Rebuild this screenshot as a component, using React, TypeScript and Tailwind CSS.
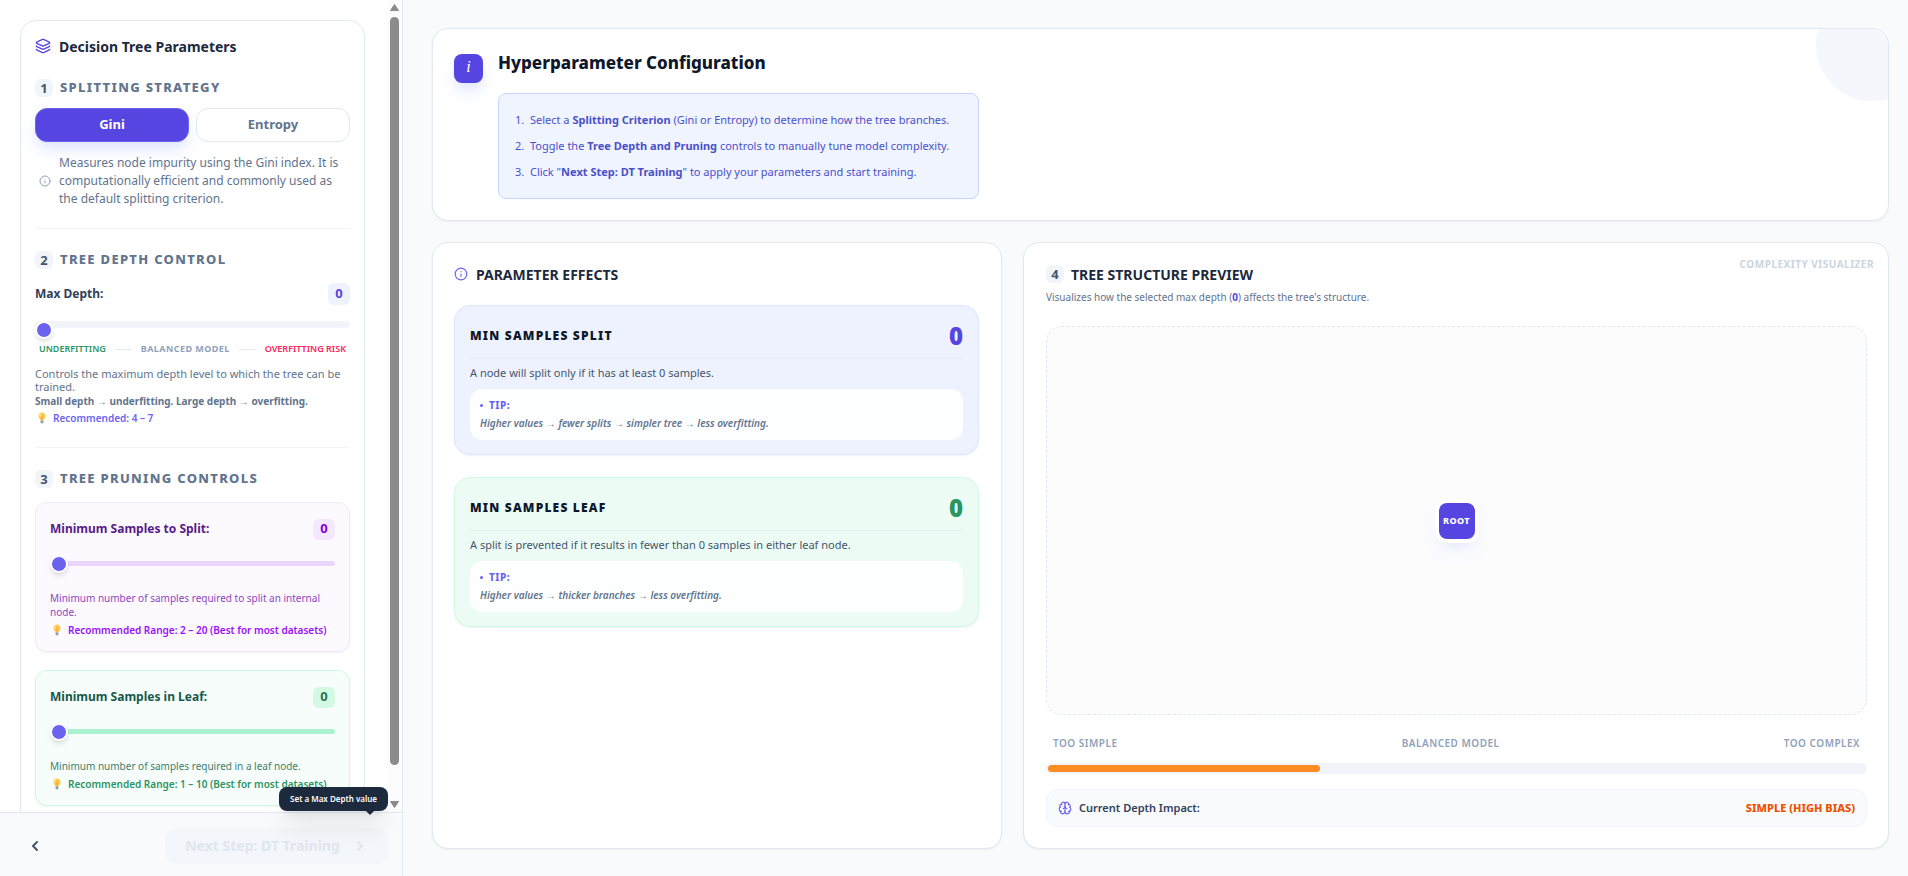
import { useState } from 'react';
import type { ReactNode } from 'react';
import { Brain, ChevronLeft, ChevronRight, Info, Layers } from 'lucide-react';
import clsx from 'clsx';

type Criterion = 'Gini' | 'Entropy';

const criterionText: Record<Criterion, string> = {
  Gini: 'Measures node impurity using the Gini index. It is computationally efficient and commonly used as the default splitting criterion.',
  Entropy: 'Measures information gain using entropy. It is slightly slower to compute and favours more balanced splits.',
};

const thumbClasses =
  '[&::-webkit-slider-thumb]:appearance-none [&::-webkit-slider-thumb]:size-[18px] [&::-webkit-slider-thumb]:rounded-full [&::-webkit-slider-thumb]:border-2 [&::-webkit-slider-thumb]:border-white [&::-webkit-slider-thumb]:bg-[#6b63f0] [&::-webkit-slider-thumb]:shadow-md';

function Bulb() {
  return (
    <svg viewBox="0 0 12 14" className="h-[12px] w-[10px] shrink-0" aria-hidden="true">
      <path d="M6 .5a4.3 4.3 0 0 0-2.6 7.7c.6.5.8 1.2.8 1.8h3.6c0-.6.2-1.3.8-1.8A4.3 4.3 0 0 0 6 .5z" fill="#fcc84a" />
      <path d="M4.6 2.2a2.3 2.3 0 0 0-1.2 2.6" stroke="#fff3c4" strokeWidth="1" fill="none" strokeLinecap="round" />
      <path d="M5 5.5l1 1 1-1M6 6.5V10" stroke="#f08c2e" strokeWidth=".7" fill="none" />
      <path d="M4.3 10h3.4v2.2c0 .7-.6 1.3-1.7 1.3s-1.7-.6-1.7-1.3z" fill="#8f9bab" />
    </svg>
  );
}

function StepBadge({ step }: { step: number }) {
  return (
    <span className="flex size-[18px] shrink-0 items-center justify-center rounded-md bg-slate-100 text-[13px] leading-none font-bold tracking-normal text-slate-600">
      {step}
    </span>
  );
}

function SectionTitle({ step, children }: { step: number; children: ReactNode }) {
  return (
    <h3 className="flex h-[18px] items-center gap-[7px] text-[13px] font-extrabold tracking-widest text-slate-500 uppercase">
      <StepBadge step={step} />
      {children}
    </h3>
  );
}

interface SampleSliderProps {
  id: string;
  label: string;
  value: number;
  max: number;
  onChange: (value: number) => void;
  help: string;
  range: string;
  tone: 'purple' | 'green';
}

function SampleSlider({ id, label, value, max, onChange, help, range, tone }: SampleSliderProps) {
  const purple = tone === 'purple';
  return (
    <div
      className={clsx(
        'rounded-xl border p-[14px] pt-[15px] shadow-xs',
        purple ? 'border-purple-100 bg-[#fdfaff]' : 'border-[#cffae2] bg-[#f7fdfa]',
      )}
    >
      <div className="flex h-[22px] items-center justify-between">
        <label htmlFor={id} className={clsx('text-[12px] font-bold', purple ? 'text-[#581c87]' : 'text-[#17594a]')}>
          {label}
        </label>
        <span
          className={clsx(
            'flex h-[21px] w-[22px] items-center justify-center rounded-md text-[13px] font-bold',
            purple ? 'bg-purple-100 text-[#8200db]' : 'bg-[#d3f9e3] text-[#28745c]',
          )}
        >
          {value}
        </span>
      </div>
      <input
        id={id}
        type="range"
        min={0}
        max={max}
        value={value}
        onChange={(e) => onChange(Number(e.target.value))}
        className={clsx(
          'mt-[21px] block h-[5px] w-full cursor-pointer appearance-none rounded-full',
          thumbClasses,
          purple ? 'bg-[#e9d5ff]' : 'bg-[#a9f3d0]',
        )}
      />
      <p className={clsx('mt-[25px] text-[10px] leading-[14px]', purple ? 'text-[#8e44bd]' : 'text-[#3d7f6b]')}>{help}</p>
      <p
        className={clsx(
          'mt-1 flex items-center gap-1.5 pl-0.5 text-[10px] leading-[14px] font-semibold',
          purple ? 'text-[#9810fa]' : 'text-[#2a9465]',
        )}
      >
        <Bulb />
        Recommended Range: {range} (Best for most datasets)
      </p>
    </div>
  );
}

interface EffectCardProps {
  title: string;
  value: number;
  text: string;
  tip: string;
  tone: 'indigo' | 'green';
}

function EffectCard({ title, value, text, tip, tone }: EffectCardProps) {
  const indigo = tone === 'indigo';
  return (
    <article
      className={clsx(
        'rounded-2xl border px-[15px] pt-[15px] pb-[14px] shadow-xs',
        indigo ? 'border-[#dbe7fe] bg-[#eef2ff]' : 'border-[#d0fae5] bg-[#ecfcf5]',
      )}
    >
      <div className="flex h-[38px] items-center justify-between border-b border-slate-200/60 pb-[7px]">
        <h4 className="text-[12px] font-black tracking-widest text-slate-900 uppercase">{title}</h4>
        <span className={clsx('text-[24px] leading-none font-black', indigo ? 'text-[#5745e2]' : 'text-[#2a9465]')}>{value}</span>
      </div>
      <p className="mt-1.5 text-[11px] leading-4 text-slate-600">{text}</p>
      <div className="mt-2 rounded-xl bg-white/90 px-2.5 pt-[7px] pb-2">
        <p className="flex items-center gap-1.5 text-[10px] leading-[18px] font-extrabold tracking-wider text-[#6b63f0]">
          <span className="size-[3px] rounded-full bg-[#6b63f0]" />
          TIP:
        </p>
        <p className="text-[10px] leading-[18px] font-semibold text-slate-500 italic">{tip}</p>
      </div>
    </article>
  );
}

export default function App() {
  const [criterion, setCriterion] = useState<Criterion>('Gini');
  const [maxDepth, setMaxDepth] = useState(0);
  const [minSplit, setMinSplit] = useState(0);
  const [minLeaf, setMinLeaf] = useState(0);

  return (
    <div className="flex h-screen overflow-hidden bg-[#f8fafc] font-['Noto_Sans',sans-serif] text-slate-800">
      {/* Sidebar */}
      <aside className="flex w-[403px] shrink-0 flex-col border-r border-slate-200 bg-white">
        <div className="flex min-h-0 flex-1">
          <div className="min-w-0 flex-1 overflow-hidden pt-5 pr-[22px] pl-5">
            <div className="rounded-2xl border border-slate-200 p-[14px] pb-6">
              <h2 className="flex h-[22px] items-center gap-2 text-[14px] font-bold text-slate-800">
                <Layers className="size-4 text-[#5745e2]" strokeWidth={2} />
                Decision Tree Parameters
              </h2>

              {/* Splitting strategy */}
              <section className="mt-[22px] border-b border-slate-100 pb-5">
                <SectionTitle step={1}>Splitting Strategy</SectionTitle>
                <div className="mt-[11px] grid grid-cols-2 gap-[7px]">
                  {(['Gini', 'Entropy'] as Criterion[]).map((c) => (
                    <button
                      key={c}
                      type="button"
                      onClick={() => setCriterion(c)}
                      className={clsx(
                        'h-[34px] rounded-xl border text-[13px] font-bold',
                        criterion === c
                          ? 'border-[#6b63f0] bg-[#5745e2] text-white shadow-lg shadow-indigo-100'
                          : 'border-slate-200 bg-white text-slate-500',
                      )}
                    >
                      {c}
                    </button>
                  ))}
                </div>
                <p className="mt-3 flex items-center gap-2 pl-1 text-[12px] leading-[18px] text-slate-500">
                  <Info className="size-3 shrink-0 text-slate-400" />
                  {criterionText[criterion]}
                </p>
              </section>

              {/* Depth */}
              <section className="mt-[22px] border-b border-slate-100 pb-[21px]">
                <SectionTitle step={2}>Tree Depth Control</SectionTitle>
                <div className="mt-[14px] flex items-center justify-between">
                  <label htmlFor="max-depth" className="text-[12px] font-bold text-slate-700">
                    Max Depth:
                  </label>
                  <span className="flex size-[22px] items-center justify-center rounded-md bg-[#eef2ff] text-[13px] font-bold text-[#5745e2]">
                    {maxDepth}
                  </span>
                </div>
                <input
                  id="max-depth"
                  type="range"
                  min={0}
                  max={20}
                  value={maxDepth}
                  onChange={(e) => setMaxDepth(Number(e.target.value))}
                  className={clsx(
                    'mt-4 block h-[7px] w-full cursor-pointer appearance-none rounded-full bg-slate-100 [&::-webkit-slider-runnable-track]:h-[7px]',
                    thumbClasses,
                  )}
                />
                <div className="mt-[14px] flex items-center justify-between px-1 text-[9px] leading-[14px]">
                  <span className="font-semibold text-[#2a9465]">UNDERFITTING</span>
                  <span className="h-px w-4 bg-slate-200" />
                  <span className="font-bold tracking-wider text-slate-400">BALANCED MODEL</span>
                  <span className="h-px w-4 bg-slate-200" />
                  <span className="font-semibold text-[#fb2357]">OVERFITTING RISK</span>
                </div>
                <p className="mt-[11px] text-[11px] leading-[13px] text-slate-500">
                  Controls the maximum depth level to which the tree can be trained.
                </p>
                <p className="text-[10px] leading-4 font-bold text-slate-500">
                  Small depth → underfitting. Large depth → overfitting.
                </p>
                <p className="mt-px flex items-center gap-1.5 pl-0.5 text-[10px] leading-4 font-semibold text-[#6b63f0]">
                  <Bulb />
                  Recommended: 4 – 7
                </p>
              </section>

              {/* Pruning */}
              <section className="mt-[22px]">
                <SectionTitle step={3}>Tree Pruning Controls</SectionTitle>
                <div className="mt-[14px] space-y-[18px]">
                  <SampleSlider
                    id="min-split"
                    label="Minimum Samples to Split:"
                    value={minSplit}
                    max={20}
                    onChange={setMinSplit}
                    help="Minimum number of samples required to split an internal node."
                    range="2 – 20"
                    tone="purple"
                  />
                  <SampleSlider
                    id="min-leaf"
                    label="Minimum Samples in Leaf:"
                    value={minLeaf}
                    max={10}
                    onChange={setMinLeaf}
                    help="Minimum number of samples required in a leaf node."
                    range="1 – 10"
                    tone="green"
                  />
                </div>
              </section>
            </div>
          </div>

          {/* Scrollbar */}
          <div className="flex w-[15px] shrink-0 flex-col items-center bg-[#fcfcfc] py-1" aria-hidden="true">
            <svg viewBox="0 0 9 7" className="h-[7px] w-[9px]">
              <path d="M4.5 .5 8.5 6.5H.5z" fill="#8b8b8b" stroke="#8b8b8b" strokeLinejoin="round" />
            </svg>
            <div className="mt-1.5 w-[9px] flex-1 rounded-full bg-[#8b8b8b]" />
            <svg viewBox="0 0 9 7" className="mt-9 h-[7px] w-[9px]">
              <path d="M4.5 6.5 8.5.5H.5z" fill="#8b8b8b" stroke="#8b8b8b" strokeLinejoin="round" />
            </svg>
          </div>
        </div>

        <footer className="flex h-16 shrink-0 items-center justify-between border-t border-slate-200 bg-[#f8fafc] pt-0.5 pr-[14px] pl-[19px]">
          <button type="button" aria-label="Back" className="flex size-8 items-center justify-center text-slate-600">
            <ChevronLeft className="size-4" strokeWidth={3} />
          </button>
          <div className="relative">
            <button
              type="button"
              disabled
              className="flex h-9 w-[223px] items-center justify-center gap-3 rounded-xl bg-[#f3f6fa] text-[14px] font-bold text-[#e0e6ef]"
            >
              Next Step: DT Training
              <ChevronRight className="size-4" strokeWidth={3} />
            </button>
            <div
              role="tooltip"
              className="absolute right-0 bottom-full mb-[17px] rounded-lg bg-slate-800 px-[11px] py-[5px] text-[8px] leading-[14px] font-semibold whitespace-nowrap text-white shadow-xl"
            >
              Set a Max Depth value
              <span className="absolute top-full right-[14px] border-4 border-transparent border-t-slate-800" />
            </div>
          </div>
        </footer>
      </aside>

      {/* Main */}
      <main className="flex min-w-0 flex-1 flex-col gap-[21px] pt-7 pr-[19px] pb-[27px] pl-[29px]">
        <section className="relative flex items-start gap-[15px] overflow-hidden rounded-2xl border border-slate-200 bg-white px-[21px] pt-[22px] pb-[21px] shadow-xs">
          <span className="absolute -top-10 -right-10 size-28 rounded-full bg-[#f6f7fd]" />
          <span className="mt-[3px] flex size-[29px] shrink-0 items-center justify-center rounded-lg bg-[#5745e2] pb-1 font-['Liberation_Serif',serif] text-[16px] leading-none text-white italic shadow-lg shadow-indigo-100">
            i
          </span>
          <div>
            <h1 className="text-[17px] leading-6 font-extrabold text-slate-900">Hyperparameter Configuration</h1>
            <ol className="mt-[18px] rounded-lg border border-[#c6d2ff] bg-[#f0f4ff] py-[13px] pr-[29px] pl-4 text-[11px] leading-[26px] text-[#4a50c8]">
              <li>
                1.&nbsp; Select a <strong className="font-bold">Splitting Criterion</strong> (Gini or Entropy) to determine how the tree branches.
              </li>
              <li>
                2.&nbsp; Toggle the <strong className="font-bold">Tree Depth and Pruning</strong> controls to manually tune model complexity.
              </li>
              <li>
                3.&nbsp; Click "<strong className="font-bold">Next Step: DT Training</strong>" to apply your parameters and start training.
              </li>
            </ol>
          </div>
        </section>

        <div className="grid min-h-0 flex-1 grid-cols-[570fr_866fr] gap-[21px]">
          {/* Parameter effects */}
          <section className="rounded-2xl border border-slate-200 bg-white p-[21px] pr-[22px] shadow-xs">
            <h2 className="flex h-5 items-center gap-2 text-[14px] font-bold text-slate-800">
              <Info className="size-[14px] text-[#6b63f0]" />
              PARAMETER EFFECTS
            </h2>
            <div className="mt-[21px] space-y-[22px]">
              <EffectCard
                title="Min Samples Split"
                value={minSplit}
                text={`A node will split only if it has at least ${minSplit} samples.`}
                tip="Higher values → fewer splits → simpler tree → less overfitting."
                tone="indigo"
              />
              <EffectCard
                title="Min Samples Leaf"
                value={minLeaf}
                text={`A split is prevented if it results in fewer than ${minLeaf} samples in either leaf node.`}
                tip="Higher values → thicker branches → less overfitting."
                tone="green"
              />
            </div>
          </section>

          {/* Tree preview */}
          <section className="relative flex flex-col rounded-2xl border border-slate-200 bg-white p-[21px] pl-[22px] shadow-xs">
            <span className="absolute top-[13px] right-[14px] text-[10px] leading-4 font-bold tracking-wider text-slate-300">
              COMPLEXITY VISUALIZER
            </span>
            <h2 className="flex h-5 items-center gap-[7px] text-[14px] font-bold text-slate-800">
              <StepBadge step={4} />
              TREE STRUCTURE PREVIEW
            </h2>
            <p className="mt-1 text-[10px] leading-[18px] text-slate-500">
              Visualizes how the selected max depth (<strong className="font-bold text-[#5745e2]">{maxDepth}</strong>) affects the tree's structure.
            </p>
            <div className="mt-5 flex min-h-0 flex-1 items-center justify-center rounded-2xl border border-dashed border-slate-200 bg-[#fcfcfd]">
              <div className="flex size-9 items-center justify-center rounded-lg bg-[#5745e2] text-[9px] font-extrabold tracking-wider text-white shadow-lg ring-4 shadow-indigo-100 ring-white">
                ROOT
              </div>
            </div>
            <div className="mt-5 flex justify-between px-[7px] text-[10px] leading-4 font-semibold tracking-wider text-slate-400">
              <span>TOO SIMPLE</span>
              <span>BALANCED MODEL</span>
              <span>TOO COMPLEX</span>
            </div>
            <div className="mt-3 rounded-full bg-slate-100 p-0.5">
              <div className="h-[7px] w-1/3 rounded-full bg-[#fd8c25]" />
            </div>
            <div className="mt-[15px] flex h-[38px] items-center justify-between rounded-xl border border-slate-100 bg-[#f8fafc] px-[11px] text-[11px]">
              <span className="flex items-center gap-[7px] font-semibold text-slate-700">
                <Brain className="size-[14px] text-[#6b63f0]" />
                Current Depth Impact:
              </span>
              <span className="font-extrabold text-[#ed5200]">SIMPLE (HIGH BIAS)</span>
            </div>
          </section>
        </div>
      </main>
    </div>
  );
}
